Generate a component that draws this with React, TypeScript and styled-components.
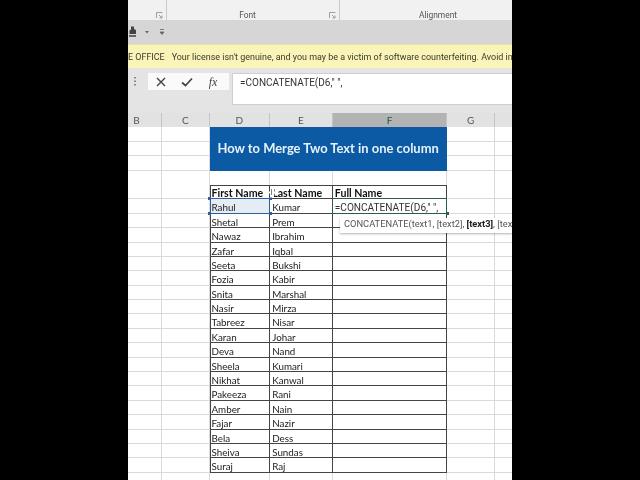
import React from "react";
import styled, { createGlobalStyle } from "styled-components";

const GlobalStyle = createGlobalStyle`
  html, body { margin: 0; padding: 0; background: #000; }
`;

const Page = styled.div`
  width: 640px;
  height: 480px;
  background: #000;
  display: flex;
  justify-content: center;
`;

const Screen = styled.div`
  position: relative;
  width: 384px;
  height: 480px;
  overflow: hidden;
  background: #fff;
  display: flex;
  flex-direction: column;
  font-family: "Roboto", sans-serif;
  filter: blur(0.35px);
`;

const Ribbon = styled.div`
  height: 20px;
  flex: none;
  background: #f1f1f1;
  display: grid;
  grid-template-columns: 39px 173px 172px;
`;

const RibbonGroup = styled.div<{ $shift?: number }>`
  position: relative;
  font-size: 8.4px;
  color: #555;
  text-align: center;
  padding-top: 10px;
  padding-right: ${({ $shift }) => ($shift && $shift > 0 ? $shift : 0)}px;
  padding-left: ${({ $shift }) => ($shift && $shift < 0 ? -$shift : 0)}px;
  line-height: 10px;
  border-right: 1px solid #c9c9c9;
  &:last-child { border-right: none; }
`;

const Launcher = styled.svg`
  position: absolute;
  right: 3px;
  top: 12px;
`;

const QuickBar = styled.div`
  height: 24px;
  flex: none;
  background: #d6d6d6;
  display: flex;
  align-items: center;
  gap: 6px;
`;

const Notice = styled.div`
  height: 24px;
  flex: none;
  background: #fbf4b8;
  border-top: 1px solid #e8e2a8;
  box-sizing: border-box;
  display: flex;
  align-items: center;
  gap: 7px;
  font-size: 8.95px;
  color: #3a3a2c;
  white-space: nowrap;
`;

const FormulaBar = styled.div`
  height: 45px;
  flex: none;
  background: #e4e4e4;
  display: flex;
  align-items: flex-start;
  padding-top: 5px;
  box-sizing: border-box;
`;

const Grip = styled.div`
  width: 20px;
  flex: none;
  height: 17px;
  display: flex;
  justify-content: center;
  align-items: center;
  padding-right: 6px;
  box-sizing: border-box;
`;

const NameButtons = styled.div`
  width: 81px;
  height: 17px;
  flex: none;
  background: #fafafa;
  display: grid;
  grid-template-columns: repeat(3, 1fr);
  align-items: center;
  justify-items: center;
  padding-right: 3px;
  box-sizing: border-box;
`;

const FxLabel = styled.span`
  font-family: "Liberation Serif", serif;
  font-style: italic;
  font-size: 12px;
  color: #444;
  line-height: 12px;
`;

const FormulaInput = styled.div`
  margin-left: 3px;
  flex: 1;
  height: 32px;
  background: #fff;
  border: 1px solid #cfcfcf;
  border-right: none;
  box-sizing: border-box;
  padding: 2px 0 0 7px;
  font-size: 10px;
  line-height: 13px;
  color: #333;
  white-space: nowrap;
`;

const Sheet = styled.div`
  position: relative;
  margin-left: -16px;
  display: grid;
  grid-template-columns: 50px 47.5px 60.7px 62.6px 114.4px 48px 48px;
  grid-auto-rows: 14.4px;
  font-family: "Lato", sans-serif;
`;

const ColumnHead = styled.div<{ $active?: boolean }>`
  height: 14.4px;
  background: ${({ $active }) => ($active ? "#b3b3b3" : "#e2e2e2")};
  border-right: 1px solid #c4c4c4;
  box-sizing: border-box;
  display: flex;
  align-items: center;
  justify-content: center;
  font-size: 10px;
  color: ${({ $active }) => ($active ? "#1f5c3c" : "#555")};
`;

const Blank = styled.div<{ $open?: boolean }>`
  border-right: 1px solid #dadada;
  border-bottom: ${({ $open }) => ($open ? "none" : "1px solid #dadada")};
  box-sizing: border-box;
`;

const Banner = styled.div`
  grid-column: 3 / span 3;
  grid-row: span 3;
  background: #0b5aa3;
  color: #e6f2fa;
  font-size: 12.95px;
  font-weight: 700;
  display: flex;
  align-items: center;
  padding-left: 8px;
  padding-bottom: 1px;
  box-sizing: border-box;
  white-space: nowrap;
`;

const TableCell = styled.div<{ $first?: boolean; $head?: boolean; $top?: boolean; $picked?: boolean }>`
  position: relative;
  box-sizing: border-box;
  border-right: 1px solid #444;
  border-bottom: 1px solid #444;
  border-left: ${({ $first }) => ($first ? "1px solid #444" : "none")};
  border-top: ${({ $top }) => ($top ? "1px solid #444" : "none")};
  background: ${({ $picked }) => ($picked ? "#e6ecf4" : "#fff")};
  padding-left: ${({ $first }) => ($first ? "1px" : "2px")};
  font-size: ${({ $head }) => ($head ? "10.6px" : "9.8px")};
  font-weight: ${({ $head }) => ($head ? 700 : 400)};
  line-height: ${({ $head }) => ($head ? "15px" : "17px")};
  color: ${({ $head }) => ($head ? "#111" : "#222")};
  white-space: nowrap;
`;

const Selection = styled.div<{ $color: string }>`
  position: absolute;
  z-index: 2;
  inset: -1px;
  border: 1.5px solid ${({ $color }) => $color};
  pointer-events: none;
`;

const Handle = styled.div<{ $color: string; $x: "left" | "right"; $y: "top" | "bottom" }>`
  position: absolute;
  ${({ $x }) => $x}: -2.5px;
  ${({ $y }) => $y}: -2.5px;
  width: 3px;
  height: 3px;
  background: ${({ $color }) => $color};
`;

const EditText = styled.span`
  font-family: "Roboto", sans-serif;
  font-size: 10.1px;
  color: #333;
`;

const Tip = styled.div`
  position: absolute;
  z-index: 3;
  left: 228px;
  top: 105px;
  width: 172px;
  height: 15px;
  background: #fff;
  box-shadow: 0 1px 2px rgba(0, 0, 0, 0.3);
  padding-left: 4px;
  box-sizing: border-box;
  font-family: "Roboto", sans-serif;
  font-size: 9.3px;
  line-height: 12px;
  color: #555;
  white-space: nowrap;
  b { color: #222; }
`;

const Cursor = styled.svg`
  position: absolute;
  z-index: 3;
  left: 156px;
  top: 74px;
`;

const names: [string, string][] = [
  ["Rahul", "Kumar"], ["Shetal", "Prem"], ["Nawaz", "Ibrahim"], ["Zafar", "Iqbal"],
  ["Seeta", "Bukshi"], ["Fozia", "Kabir"], ["Snita", "Marshal"], ["Nasir", "Mirza"],
  ["Tabreez", "Nisar"], ["Karan", "Johar"], ["Deva", "Nand"], ["Sheela", "Kumari"],
  ["Nikhat", "Kanwal"], ["Pakeeza", "Rani"], ["Amber", "Nain"], ["Fajar", "Nazir"],
  ["Bela", "Dess"], ["Sheiva", "Sundas"], ["Suraj", "Raj"],
];

const columns = ["B", "C", "D", "E", "F", "G", ""];

// two plain cells either side of the table
const Margin = () => (
  <>
    <Blank />
    <Blank />
  </>
);

const refBlue = "#2f5f9a";
const editGreen = "#2a5f45";

export default function App() {
  return (
    <Page>
      <GlobalStyle />
      <Screen>
        <Ribbon>
          <RibbonGroup>
            <Launcher width="7" height="7" viewBox="0 0 7 7" fill="none" stroke="#8a8a8a" strokeWidth="0.8">
              <path d="M0.5 6V0.5H6.5M3 3L6 6M6 3.5V6H3.5" />
            </Launcher>
          </RibbonGroup>
          <RibbonGroup $shift={11}>
            Font
            <Launcher width="7" height="7" viewBox="0 0 7 7" fill="none" stroke="#8a8a8a" strokeWidth="0.8">
              <path d="M0.5 6V0.5H6.5M3 3L6 6M6 3.5V6H3.5" />
            </Launcher>
          </RibbonGroup>
          <RibbonGroup $shift={-24}>Alignment</RibbonGroup>
        </Ribbon>

        <QuickBar>
          <svg width="10" height="12" viewBox="0 0 10 12">
            <path d="M3 0.5h3v2.5l2 1v4H1.5V4.5L3 3.5z" fill="#444" />
            <path d="M1 9h7v2H1z" fill="#666" />
          </svg>
          <svg width="6" height="4" viewBox="0 0 6 4">
            <path d="M1 1h4L3 3.5z" fill="#666" />
          </svg>
          <svg width="6" height="6" viewBox="0 0 6 6" style={{ marginLeft: 3 }}>
            <path d="M1 0.5h4M1 3h4L3 5.5z" stroke="#666" strokeWidth="0.8" fill="#666" />
          </svg>
        </QuickBar>

        <Notice>
          <span>E OFFICE</span>
          <span>Your license isn't genuine, and you may be a victim of software counterfeiting. Avoid in</span>
        </Notice>

        <FormulaBar>
          <Grip>
            <svg width="2" height="9" viewBox="0 0 2 9" fill="#888">
              <rect y="0" width="2" height="1.5" />
              <rect y="3.5" width="2" height="1.5" />
              <rect y="7" width="2" height="1.5" />
            </svg>
          </Grip>
          <NameButtons>
            <svg width="10" height="10" viewBox="0 0 10 10" fill="none" stroke="#444" strokeWidth="1.4">
              <path d="M1 1l8 8M9 1l-8 8" />
            </svg>
            <svg width="12" height="10" viewBox="0 0 12 10" fill="none" stroke="#444" strokeWidth="1.7">
              <path d="M1 5.5l3.5 3L11 1.5" />
            </svg>
            <FxLabel>fx</FxLabel>
          </NameButtons>
          <FormulaInput>=CONCATENATE(D6," ",</FormulaInput>
        </FormulaBar>

        <Sheet>
          {columns.map((c) => (
            <ColumnHead key={c || "H"} $active={c === "F"}>{c}</ColumnHead>
          ))}

          <Margin />
          <Banner>How to Merge Two Text in one column</Banner>
          <Margin />
          <Margin />
          <Margin />
          <Margin />
          <Margin />

          {columns.map((c) => (
            <Blank key={"gap" + c} $open />
          ))}

          <Margin />
          <TableCell $first $head $top>First Name</TableCell>
          <TableCell $head $top>Last Name</TableCell>
          <TableCell $head $top>Full Name</TableCell>
          <Margin />

          {names.map(([first, last], i) => (
            <React.Fragment key={first}>
              <Margin />
              <TableCell $first $picked={i === 0}>
                {first}
                {i === 0 && (
                  <Selection $color={refBlue}>
                    <Handle $color={refBlue} $x="left" $y="top" />
                    <Handle $color={refBlue} $x="right" $y="top" />
                    <Handle $color={refBlue} $x="left" $y="bottom" />
                    <Handle $color={refBlue} $x="right" $y="bottom" />
                  </Selection>
                )}
              </TableCell>
              <TableCell>{last}</TableCell>
              <TableCell>
                {i === 0 && (
                  <>
                    <EditText>=CONCATENATE(D6," ",</EditText>
                    <Selection $color={editGreen}>
                      <Handle $color={editGreen} $x="right" $y="bottom" />
                    </Selection>
                  </>
                )}
              </TableCell>
              <Margin />
            </React.Fragment>
          ))}

          {Array.from({ length: 14 }, (_, i) => (
            <Blank key={"end" + i} />
          ))}

          <Tip>
            CONCATENATE(text1, [text2], <b>[text3]</b>, [tex
          </Tip>
          <Cursor width="8" height="11" viewBox="0 0 8 11">
            <path d="M4 0.5v10" stroke="#fff" strokeWidth="4" />
            <path d="M1 5.5h6" stroke="#fff" strokeWidth="2" />
            <path d="M3.5 2v6" stroke="#333" strokeWidth="0.6" />
          </Cursor>
        </Sheet>
      </Screen>
    </Page>
  );
}
